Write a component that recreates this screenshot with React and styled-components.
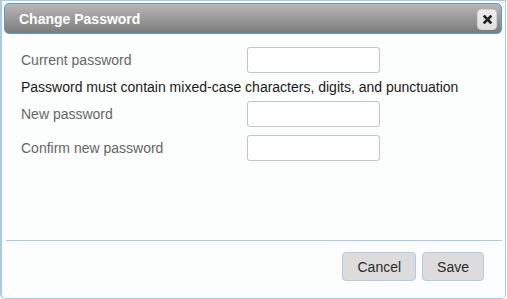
import React from "react";
import styled, { createGlobalStyle } from "styled-components";

const Global = createGlobalStyle`
  html, body { margin: 0; padding: 0; background: #ffffff; }
  body { font-family: "Liberation Sans", Arial, Helvetica, sans-serif; }
  * { box-sizing: border-box; }
`;

const Dialog = styled.div`
  width: 506px;
  height: 299px;
  border: 1px solid #a9cbe6;
  border-left-width: 2px;
  border-radius: 0 0 5px 5px;
  background: #fcfdfd;
  padding: 2px 3px 3px 2px;
  display: flex;
  flex-direction: column;
`;

const TitleBar = styled.div`
  height: 31px;
  border: 1px solid #5c9ad0;
  border-radius: 5px;
  background: linear-gradient(#b8b8b8, #7c7c7c);
  display: flex;
  align-items: center;
  justify-content: space-between;
  padding: 0 4px 0 14px;
`;

const Title = styled.span`
  color: #ffffff;
  font-weight: bold;
  font-size: 14px;
`;

const CloseButton = styled.button`
  width: 20px;
  height: 21px;
  margin-top: 1px;
  padding: 0;
  border: 1px solid #cfd3d6;
  border-radius: 4px;
  background: linear-gradient(#ececec, #e0e0e0);
  display: flex;
  align-items: center;
  justify-content: center;
`;

const Content = styled.div`
  flex: 1;
  padding: 13px 0 0 17px;
  display: flex;
  flex-direction: column;
`;

const Row = styled.div`
  display: grid;
  grid-template-columns: 226px 133px;
  align-items: center;
  height: 26px;
  margin-bottom: ${(p) => p.$gap || 0}px;
`;

const Label = styled.label`
  color: #666666;
  font-size: 14px;
`;

const Input = styled.input`
  width: 133px;
  height: 26px;
  border: 1px solid #c5c5c5;
  border-radius: 3px;
  background: #ffffff;
  outline: none;
`;

const Hint = styled.div`
  color: #1a1a1a;
  font-size: 14px;
  line-height: 28px;
`;

const ButtonPane = styled.div`
  border-top: 1px solid #a9cbe6;
  margin-left: 2px;
  padding: 11px 18px 14px 0;
  display: flex;
  justify-content: flex-end;
  gap: 6px;
`;

const Button = styled.button`
  height: 29px;
  padding: 0 ${(p) => p.$pad}px;
  border: 1px solid #b4cde3;
  border-radius: 4px;
  background: #dcdcdc;
  color: #2b2b2b;
  font-family: "Liberation Sans", Arial, sans-serif;
  font-size: 14px;
`;

export default function App() {
  return (
    <>
      <Global />
      <Dialog>
        <TitleBar>
          <Title>Change Password</Title>
          <CloseButton aria-label="close">
            <svg width="9" height="9" viewBox="0 0 9 9">
              <path d="M1.5 1.5L7.5 7.5M7.5 1.5L1.5 7.5" stroke="#222" strokeWidth="2.6" strokeLinecap="square" />
            </svg>
          </CloseButton>
        </TitleBar>
        <Content>
          <Row>
            <Label>Current password</Label>
            <Input type="password" />
          </Row>
          <Hint>Password must contain mixed-case characters, digits, and punctuation</Hint>
          <Row $gap={8}>
            <Label>New password</Label>
            <Input type="password" />
          </Row>
          <Row>
            <Label>Confirm new password</Label>
            <Input type="password" />
          </Row>
        </Content>
        <ButtonPane>
          <Button $pad={14}>Cancel</Button>
          <Button $pad={14}>Save</Button>
        </ButtonPane>
      </Dialog>
    </>
  );
}
